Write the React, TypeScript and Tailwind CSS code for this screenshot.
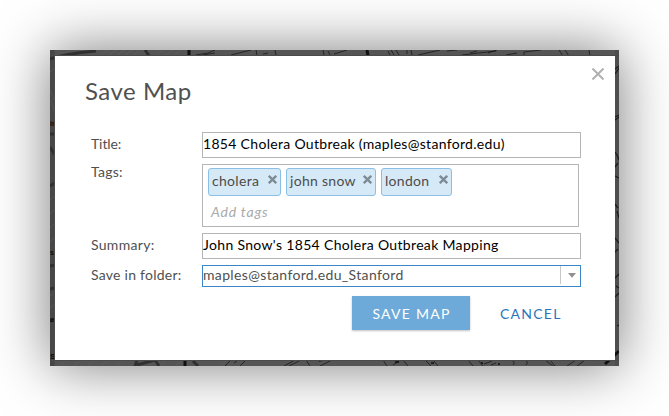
import type { ReactNode } from "react";

function MapBackdrop() {
  return (
    <svg className="absolute inset-0" width="569" height="316" viewBox="0 0 569 316" fill="none">
      <rect width="569" height="316" fill="#555555" />
      <rect width="5" height="316" fill="#474747" />
      <rect x="565" width="4" height="316" fill="#4e4e4e" />
      <g stroke="#626262" strokeWidth="0.5">
        <path d="M50 6l8-6M58 6l8-6M66 6l8-6M74 6l8-6M82 6l8-6M104 6l10-6M114 6l10-6M122 6l10-6" />
        <path d="M0 22l5-4M0 40l5 12M1 50l4 14M0 150l5-5M0 164l5-5M0 178l5-5M0 192l5-5M0 246l5-4M0 258l5-4" />
        <path d="M10 315l7-5M24 315l7-5M38 315l7-5M52 315l7-5M66 315l7-5M110 315l7-5M126 315l7-5M170 315l7-5" />
      </g>
      <g stroke="#303030" strokeWidth="3">
        <path d="M0 9Q14 4 46 1M95 0l5 7M0 84h5M0 97l5 8M0 136l5-3M0 216l5-1M0 239l5-1" />
        <path d="M0 271l5-2M87 310l-2 6M87 315l18-5M105 310l4 6M143 311l5 5" />
      </g>
      <g stroke="#111111">
        <path strokeWidth="3" d="M139 0v6M317 0l1 6M135 310v6M555 314l14-13" />
        <g strokeOpacity="0.7">
          <path d="M146 5l12-2 7-3M153 5l12-2M181 5l20-5M206 0l1 5M213 4l5-1M225 0l1 5M273 0l1 5M278 1l2 4M284 4l13-4M338 1l2 4M341 0l3 5M346 0l3 5M357 0v4M361 0l1 5M368 5l22-5M397 1l10-1" />
          <path d="M412 5l34-4M420 3l7-2M438 3l9-3M456 5l11-2M474 5v-3l17-2M509 0l4 6M515 0l4 6M539 0l1 6" />
          <path d="M175 316l6-6M184 313l4-3M190 316l6-6M234 316l11-6M239 316l12-6M256 310l4 6M270 316l12-6M333 310l4 6M343 315l6-4M353 310l5 6M375 310l6 6M383 310l5 6M418 310l5 6M428 310l5 6M434 314l8-3M441 315l5-2M461 310q5 2 2 5M475 310q4 2 1 5M495 310l8 6M500 310l5 6M517 316l9-6M527 316l8-6" />
        </g>
        <path strokeWidth="1.5" d="M345 312h4M269 311l5-1M381 313h3M431 313h2M448 314h2" />
        <path strokeWidth="1.3" strokeOpacity="0.8" d="M565 19l4-3M565 24l4-6M565 67l4-2M565 70l4-3M565 102l2 3 2 5M565 117l3-4M565 126l4 2M565 154l3 4M567 161l2 7M565 188l4 5M565 202l3-3M565 228l4-4M566 236l3 2M565 247l4-4M567 276l2-1" />
      </g>
      <g fill="#0c0c0c" fontFamily="Liberation Sans, sans-serif" fontWeight="bold" fontSize="8">
        <text x="0" y="76" fontSize="7">ir</text>
        <text x="0" y="205" fontSize="7">so</text>
        <text x="0" y="272">e</text>
        <text x="0" y="309">St.</text>
      </g>
      <path d="M0 5.5h569M4.5 0v316M0 310.5h569" stroke="#4b4b4b" />
    </svg>
  );
}

function Tag({ children, className }: { children: ReactNode; className: string }) {
  return (
    <div className={`flex h-7 justify-between rounded-[3px] border border-[#8cbfe5] bg-[#d6e9f7] pr-[3px] pl-[3px] text-[#4c4c4c] ${className}`}>
      <span className="leading-6">{children}</span>
      <svg className="mt-1.5" width="9" height="9" viewBox="0 0 9 9">
        <path d="M0.8 0.8l7.4 7.4M8.2 0.8L0.8 8.2" stroke="#7d8b95" strokeWidth="2.3" />
      </svg>
    </div>
  );
}

export default function App() {
  return (
    <div className="h-[416px] w-[669px] overflow-hidden bg-white p-[50px] font-['Lato','Noto_Sans',sans-serif] text-[14px] whitespace-nowrap text-[#505050]">
      <div className="relative h-[316px] w-[569px] pt-1.5 pl-[5px] shadow-[0_0_54px_rgba(0,0,0,0.52)]">
        <MapBackdrop />
        <div className="relative flex h-[304px] w-[560px] flex-col bg-white pl-[30px]">
          <div className="flex h-[76px] items-start justify-between pr-[11px]">
            <h1 className="pt-[17px] text-[24px] leading-9 tracking-[0.5px]">Save Map</h1>
            <svg className="mt-3" width="12" height="12" viewBox="0 0 12 12">
              <path d="M0.5 0.5l11 11M11.5 0.5l-11 11" stroke="#b0b0b0" strokeWidth="2" />
            </svg>
          </div>
          <div className="grid w-[496px] grid-cols-[111px_379px] gap-y-1.5 pl-1.5 leading-6">
            <div className="tracking-[-0.1px]">Title:</div>
            <div className="h-[26px] border border-[#b5b5b5] leading-[22px] tracking-[0.31px] text-black">
              1854 Cholera Outbreak (maples@stanford.edu)
            </div>
            <div className="leading-4 tracking-[0.25px]">Tags:</div>
            <div className="h-[63px] w-[377px] border border-[#b5b5b5] pt-[3px] pl-[5px]">
              <div className="flex gap-[5px] tracking-[0.3px]">
                <Tag className="w-[73px]">cholera</Tag>
                <Tag className="w-[90px]">john snow</Tag>
                <Tag className="w-[71px]">london</Tag>
              </div>
              <div className="pt-1 pl-[3px] tracking-[0.8px] text-[#a9a9a9] italic">Add tags</div>
            </div>
            <div className="tracking-[0.3px]">Summary:</div>
            <div className="h-[26px] border border-[#b5b5b5] leading-[22px] tracking-[0.33px] text-black">
              John Snow's 1854 Cholera Outbreak Mapping
            </div>
            <div className="leading-5 tracking-[0.25px]">Save in folder:</div>
            <div className="flex h-[22px] border border-[#3a86c8] leading-[18px]">
              <span className="flex-1 tracking-[0.35px]">maples@stanford.edu_Stanford</span>
              <span className="flex h-[18px] w-5 justify-center border-l border-[#c8c8c8] pt-[7px] pl-[3px]">
                <svg width="8" height="5" viewBox="0 0 8 5"><path d="M0 0h8L4 4.8z" fill="#909090" /></svg>
              </span>
            </div>
          </div>
          <div className="mt-[9px] ml-[267px] flex h-[34px] items-center">
            <button className="h-[34px] w-[118px] bg-[#6eaad9] pl-px tracking-[1.25px] text-white shadow-[0_1px_2px_rgba(0,0,0,0.25)]">SAVE MAP</button>
            <button className="ml-[30px] tracking-[1.25px] text-[#2a76b9]">CANCEL</button>
          </div>
        </div>
      </div>
    </div>
  );
}
